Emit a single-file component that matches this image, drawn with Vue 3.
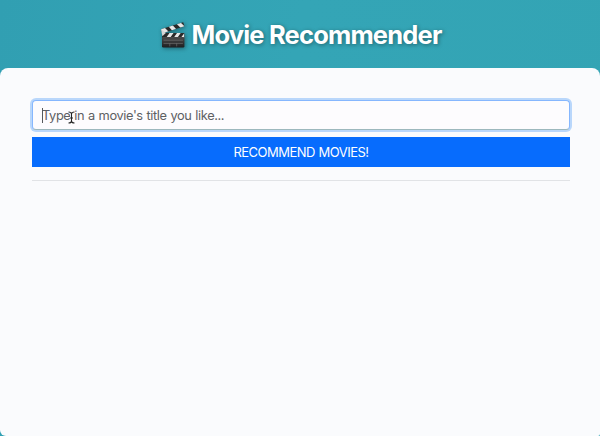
<script setup>
import { ref } from 'vue'

const title = ref('')
</script>

<template>
  <div class="page">
    <header class="header">
      <svg class="clapper" viewBox="0 0 26 27" aria-hidden="true">
        <defs>
          <linearGradient id="slate" x1="0" y1="0" x2="0" y2="1">
            <stop offset="0" stop-color="#4a4a4a" />
            <stop offset="1" stop-color="#1f1f21" />
          </linearGradient>
          <clipPath id="upper"><path d="M1 8.2 23.2 1.2 24.4 5.2 2.4 12.2Z" /></clipPath>
          <clipPath id="lower"><path d="M2 12h22.4v5H2Z" /></clipPath>
        </defs>
        <g clip-path="url(#upper)">
          <path d="M0 0h26v14H0Z" fill="#292929" />
          <path d="M0 7 4 6 9 11 4 13ZM8 4.8 12 3.5 16.5 8.5 12.5 10ZM16 2.2 20 1 25 5.8 21 7.2Z" fill="#e6e6e6" />
        </g>
        <g clip-path="url(#lower)">
          <path d="M0 12h26v5H0Z" fill="#292929" />
          <path d="M6 17 9.5 12h4L10 17ZM13.5 17 17 12h3.7L17.2 17ZM20.7 17 24.4 12v5Z" fill="#e6e6e6" />
        </g>
        <path d="M1 8.2 5.8 12 2.4 15.2Z" fill="#d5d5d5" />
        <rect x="2" y="16" width="22.4" height="10.4" rx="1.2" fill="url(#slate)" />
        <path d="M3.5 19.2h19.4M3.5 22.4h19.4M9.8 22.4v3M16.7 22.4v3" stroke="#777" stroke-width=".6" />
      </svg>
      <h1>Movie Recommender</h1>
    </header>
    <main class="panel">
      <div class="field">
        <input v-model="title" type="text" placeholder="Type in a movie's title you like..." />
        <span class="caret"></span>
        <svg class="pointer" viewBox="0 0 9 13" aria-hidden="true">
          <path d="M1.5 1C3 1 4.5 1.4 4.5 3v7c0 1.6-1.5 2-3 2M7.5 1c-1.5 0-3 .4-3 2v7c0 1.6 1.5 2 3 2M3 7h3" fill="none" stroke="#fff" stroke-width="2.2" />
          <path d="M1.5 1C3 1 4.5 1.4 4.5 3v7c0 1.6-1.5 2-3 2M7.5 1c-1.5 0-3 .4-3 2v7c0 1.6 1.5 2 3 2M3 7h3" fill="none" stroke="#222" stroke-width="1.1" />
        </svg>
      </div>
      <button type="button">RECOMMEND MOVIES!</button>
      <hr />
    </main>
  </div>
</template>

<style>
body {
  margin: 0;
  overflow: hidden;
}
</style>

<style scoped>
.page {
  box-sizing: border-box;
  height: 436px;
  display: flex;
  flex-direction: column;
  background: linear-gradient(100deg, #319fb2, #34a5b6 45%, #33a4b4);
  font-family: Inter, "Liberation Sans", sans-serif;
}
.header {
  height: 68px;
  flex: none;
  display: flex;
  justify-content: center;
  align-items: center;
  gap: 6px;
  padding-left: 1px;
}
.clapper {
  width: 26px;
  height: 27px;
  margin-top: 1px;
  filter: drop-shadow(1px 1px 2px rgba(0, 0, 0, 0.4));
}
h1 {
  margin: 2px 0 0;
  font-size: 25.5px;
  line-height: 32px;
  font-weight: 700;
  letter-spacing: -0.82px;
  white-space: nowrap;
  color: #fff;
  text-shadow: 1px 1px 4px rgba(0, 0, 0, 0.4);
}
.panel {
  flex: 1;
  box-sizing: border-box;
  padding: 32px 30px 0 32px;
  border-radius: 8px 8px 2px 6px;
  background: #fafbfd;
}
.field {
  position: relative;
  height: 30px;
}
input {
  display: block;
  box-sizing: border-box;
  width: 100%;
  height: 30px;
  padding: 0 10px 0 9px;
  border: 1px solid #86b7fe;
  border-bottom-color: #9db8bd;
  border-radius: 4px;
  outline: none;
  background: #fdfcfe;
  box-shadow: 0 0 0 2px #b9d7fb;
  font-family: inherit;
  font-size: 12.8px;
  letter-spacing: -0.38px;
  word-spacing: 0.6px;
  color: #212529;
}
input::placeholder {
  color: #5d6063;
  opacity: 1;
}
.caret {
  position: absolute;
  left: 10px;
  top: 8px;
  width: 1px;
  height: 15px;
  background: #55585b;
}
.pointer {
  position: absolute;
  left: 35px;
  top: 11px;
  width: 9px;
  height: 13px;
}
button {
  display: block;
  width: 100%;
  height: 30px;
  margin-top: 7px;
  padding: 0;
  border: 0;
  background: #076cfd;
  font-family: inherit;
  font-size: 13px;
  letter-spacing: -0.52px;
  word-spacing: 0.6px;
  color: #fff;
}
hr {
  height: 1px;
  margin: 13px 0 0;
  border: 0;
  background: #e1e3e6;
}
</style>
